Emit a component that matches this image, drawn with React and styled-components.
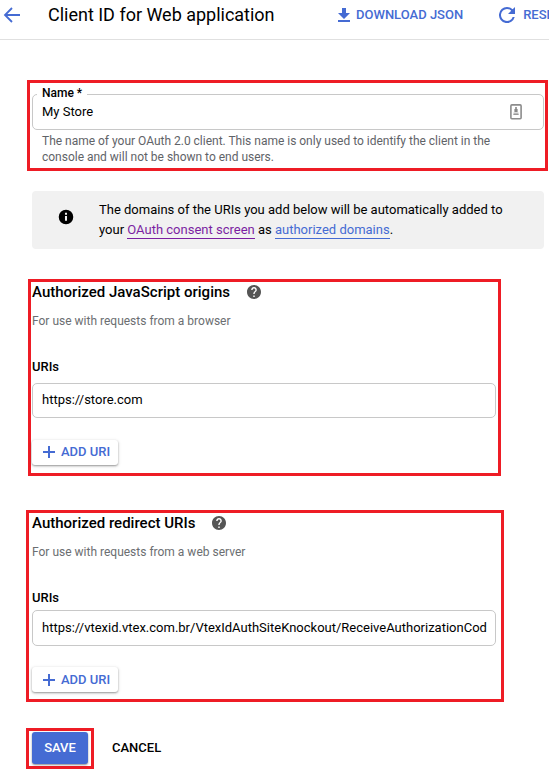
import React from "react";
import styled, { createGlobalStyle, css } from "styled-components";

const Global = createGlobalStyle`
  * { box-sizing: border-box; }
  body {
    margin: 0;
    background: #fff;
    color: #000;
    font: 400 13px/20px Roboto, "Liberation Sans", sans-serif;
    overflow: hidden;
  }
  h1, h2, p { margin: 0; }
  svg { display: block; flex: none; }
`;

const blue = "#456bd3";

const Page = styled.div`
  width: 549px;
  height: 773px;
  overflow: hidden;
`;

const Header = styled.header`
  display: flex;
  align-items: center;
  height: 40px;
  padding: 0 0 10px 3px;
  border-bottom: 1px solid #e0e0e0;
  white-space: nowrap;
`;

const Title = styled.h1`
  flex: none;
  width: 290px;
  margin-left: 27px;
  font-size: 18px;
  font-weight: 400;
  line-height: 28px;
  letter-spacing: -0.01px;
`;

const buttonText = css`
  font: 500 13px/16px Roboto, "Liberation Sans", sans-serif;
`;

const HeaderAction = styled.button`
  display: flex;
  align-items: center;
  flex: none;
  gap: ${(p) => p.$gap}px;
  margin-right: 36px;
  padding: 0;
  border: 0;
  background: none;
  color: ${blue};
  ${buttonText}
`;

const Highlight = styled.section`
  flex: none;
  width: ${(p) => p.$w}px;
  height: ${(p) => p.$h}px;
  margin: ${(p) => p.$margin};
  padding: ${(p) => p.$pad || "0"};
  border: 3px solid #ee1c25;
`;

const Field = styled.div`
  position: relative;
  display: flex;
  align-items: center;
  justify-content: space-between;
  width: ${(p) => p.$w}px;
  height: ${(p) => p.$h || 36}px;
  padding: 0 ${(p) => p.$right || 0}px 0 9px;
  border: 1px solid #c8c8c8;
  border-radius: 5px;
  white-space: nowrap;
`;

const FieldText = styled.span`
  padding-bottom: ${(p) => p.$lift || 0}px;
  line-height: 18px;
`;

const FloatLabel = styled.label`
  position: absolute;
  left: 4px;
  top: -9px;
  padding: 0 5px;
  background: #fff;
  font-size: 12px;
  font-weight: 500;
  line-height: 14px;
`;

const Hint = styled.p`
  margin: 3px 0 0 10px;
  color: #5f6368;
  font-size: 12px;
  line-height: 16px;
  letter-spacing: -0.01px;
  white-space: nowrap;
`;

const Notice = styled.aside`
  display: flex;
  align-items: flex-start;
  width: 512px;
  height: 58px;
  margin: 20px 0 0 32px;
  padding: 9px 0 0 26px;
  border-radius: 4px;
  background: #f1f1f1;

  > svg { margin-top: 9px; }
`;

const NoticeText = styled.p`
  margin: 0 0 0 25px;
  white-space: nowrap;
`;

const Link = styled.a`
  padding-bottom: 1px;
  border-bottom: 1px solid;
  color: ${(p) => (p.$visited ? "#7b1fa2" : blue)};
`;

const SectionHead = styled.div`
  display: flex;
  align-items: center;
  gap: ${(p) => p.$gap}px;
  height: 20px;
`;

const SectionTitle = styled.h2`
  font-size: 15px;
  font-weight: 500;
  line-height: 20px;
  letter-spacing: 0.01px;
  white-space: nowrap;
`;

const Description = styled.p`
  margin-top: 11px;
  color: #6b6e71;
  font-size: 12px;
  line-height: 16px;
`;

const GroupLabel = styled.div`
  margin: 30px 0 ${(p) => p.$below}px;
  font-size: 13px;
  font-weight: 500;
  line-height: 16px;
`;

const AddButton = styled.button`
  display: flex;
  align-items: center;
  gap: 6px;
  width: 86px;
  height: 25px;
  margin-top: ${(p) => p.$top}px;
  padding: 0 0 ${(p) => p.$lift || 0}px 11px;
  border: 0;
  border-radius: 3px;
  background: #fff;
  box-shadow: 0 1px 2px rgba(0, 0, 0, 0.35), 0 1px 4px rgba(0, 0, 0, 0.12);
  color: ${blue};
  white-space: nowrap;
  ${buttonText}
`;

const Footer = styled.footer`
  display: flex;
  align-items: center;
  margin: 26px 0 0 26px;
`;

const SaveButton = styled.button`
  display: block;
  width: 56px;
  height: 32px;
  padding: 0;
  border: 0;
  border-radius: 3px;
  background: ${blue};
  box-shadow: 0 1px 2px rgba(0, 0, 0, 0.45);
  color: #fff;
  ${buttonText}
`;

const CancelButton = styled.button`
  margin-left: 18px;
  padding: 0 0 2px;
  border: 0;
  background: none;
  color: #000;
  ${buttonText}
`;

const BackIcon = () => (
  <svg width="18" height="16" viewBox="0 0 18 16" fill="none" stroke={blue} strokeWidth="1.8">
    <path d="M17 8H2.5M9 1L2 8l7 7" />
  </svg>
);

const DownloadIcon = () => (
  <svg width="12" height="14" viewBox="0 0 12 14" fill={blue}>
    <path d="M4 0h4v5h4L6 11 0 5h4zM0 12h12v2H0z" />
  </svg>
);

const ResetIcon = () => (
  <svg width="16" height="16" viewBox="4 4 16 16" fill={blue}>
    <path d="M17.65 6.35A7.96 7.96 0 0 0 12 4a8 8 0 1 0 7.73 10h-2.08A6 6 0 1 1 12 6c1.66 0 3.14.69 4.22 1.78L13 11h7V4z" />
  </svg>
);

const ContactIcon = () => (
  <svg width="12" height="16" viewBox="0 0 12 16">
    <rect x="0.9" y="0.9" width="10.2" height="13.8" rx="1" fill="#fff" stroke="#8c8c8c" strokeWidth="1.6" />
    <path d="M5.2 3h1.6v2h.8v3H4.4V5h.8z" fill="#888" />
    <path d="M3.5 8.5h5v2.5h-5z" fill="#bbb" />
    <path d="M3.5 10h5v1h-5z" fill="#999" />
  </svg>
);

const InfoIcon = () => (
  <svg width="16" height="16" viewBox="1 1 22 22">
    <path d="M12 2a10 10 0 1 0 0 20 10 10 0 0 0 0-20zm1.4 15h-2.8v-6.5h2.8zm0-8.2h-2.8V6.2h2.8z" fill="#000" />
  </svg>
);

const HelpIcon = () => (
  <svg width="14" height="14" viewBox="2 2 20 20" fill="#555">
    <path d="M12 2C6.48 2 2 6.48 2 12s4.48 10 10 10 10-4.48 10-10S17.52 2 12 2zm1 17h-2v-2h2v2zm2.07-7.75l-.9.92C13.45 12.9 13 13.5 13 15h-2v-.5c0-1.1.45-2.1 1.17-2.83l1.24-1.26c.37-.36.59-.86.59-1.41 0-1.1-.9-2-2-2s-2 .9-2 2H8c0-2.21 1.79-4 4-4s4 1.79 4 4c0 .88-.36 1.68-.93 2.25z" />
  </svg>
);

const PlusIcon = () => (
  <svg width="12" height="12" viewBox="0 0 12 12" fill={blue}>
    <path d="M5 0h2v5h5v2H7v5H5V7H0V5h5z" />
  </svg>
);

function UriGroup({ title, gap, description, value, valueLift, below, top, height, lift }) {
  return (
    <>
      <SectionHead $gap={gap}>
        <SectionTitle>{title}</SectionTitle>
        <HelpIcon />
      </SectionHead>
      <Description>{description}</Description>
      <GroupLabel $below={below}>URIs</GroupLabel>
      <Field $w={464} $h={height}>
        <FieldText $lift={valueLift}>{value}</FieldText>
      </Field>
      <AddButton $top={top} $lift={lift}>
        <PlusIcon />
        ADD URI
      </AddButton>
    </>
  );
}

export default function App() {
  return (
    <Page>
      <Global />
      <Header>
        <BackIcon />
        <Title>Client ID for Web application</Title>
        <HeaderAction $gap={6}>
          <DownloadIcon />
          DOWNLOAD JSON
        </HeaderAction>
        <HeaderAction $gap={8}>
          <ResetIcon />
          RESET SECRET
        </HeaderAction>
      </Header>

      <Highlight $w={521} $h={91} $margin="40px 0 0 27px" $pad="11px 0 0 2px">
        <Field $w={512} $right={21}>
          <FloatLabel>Name *</FloatLabel>
          <FieldText>My Store</FieldText>
          <ContactIcon />
        </Field>
        <Hint>
          The name of your OAuth 2.0 client. This name is only used to identify the client in the
          <br />
          console and will not be shown to end users.
        </Hint>
      </Highlight>

      <Notice>
        <InfoIcon />
        <NoticeText>
          The domains of the URIs you add below will be automatically added to
          <br />
          your <Link $visited>OAuth consent screen</Link> as <Link>authorized domains</Link>.
        </NoticeText>
      </Notice>

      <Highlight $w={473} $h={197} $margin="30px 0 0 28px" $pad="0 0 0 1px">
        <UriGroup
          title="Authorized JavaScript origins"
          gap={17}
          description="For use with requests from a browser"
          value="https://store.com"
          valueLift={2}
          below={8}
          height={35}
          top={22}
          lift={1}
        />
      </Highlight>

      <Highlight $w={478} $h={192} $margin="34px 0 0 26px" $pad="0 0 0 3px">
        <UriGroup
          title="Authorized redirect URIs"
          gap={16}
          description="For use with requests from a web server"
          value="https://vtexid.vtex.com.br/VtexIdAuthSiteKnockout/ReceiveAuthorizationCod"
          below={4}
          height={36}
          top={21}
        />
      </Highlight>

      <Footer>
        <Highlight $w={68} $h={41} $margin="0" $pad="1px 0 0 3px">
          <SaveButton>SAVE</SaveButton>
        </Highlight>
        <CancelButton>CANCEL</CancelButton>
      </Footer>
    </Page>
  );
}
